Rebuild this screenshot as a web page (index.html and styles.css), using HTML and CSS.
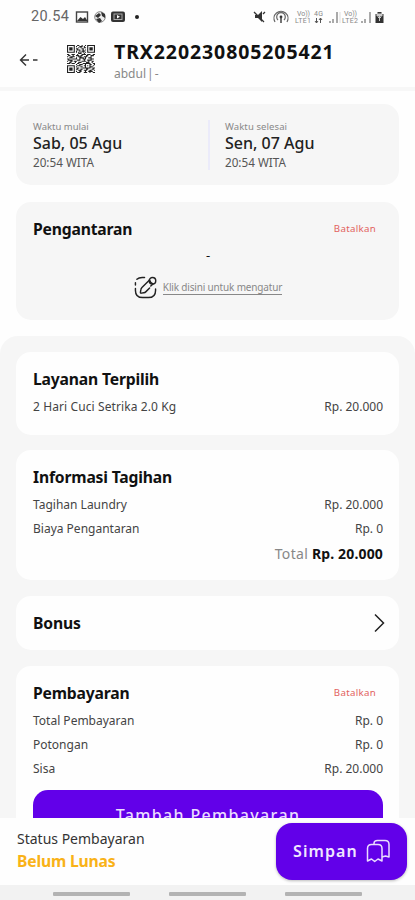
FILE: index.html
```html
<!DOCTYPE html>
<html lang="id">
<head>
<meta charset="utf-8">
<title>Detail Transaksi</title>
<link rel="stylesheet" href="styles.css">
</head>
<body>
<div class="phone">
  <div class="status">
    <span class="clock">20.54</span>
    <svg class="left-icons" viewBox="0 0 66 14">
      <rect x="1.5" y="2" width="11" height="10" fill="none" stroke="#444" stroke-width="1.4"/><path d="M2 11l3.500-4 2.500 2 2-2 2.500 4z" fill="#333"/>
      <circle cx="25" cy="7" r="5.300" fill="#eee" stroke="#888"/><path d="M20 6l4-3 2 2-3 3zM26 2l4 2v4l-3-2zM21 9l4-1 2 3-3 2z" fill="#333"/>
      <rect x="36" y="1.500" width="14" height="10.500" rx="2" fill="#333"/><rect x="39" y="4" width="8" height="5.500" fill="none" stroke="#aaa"/><path d="M42 5l3 1.800-3 1.800z" fill="#fff"/>
      <circle cx="62" cy="7" r="2" fill="#222"/>
    </svg>
    <svg class="right-icons" viewBox="0 0 134 16">
      <path d="M2 6h3l4-4v11l-4-4H2z" fill="#333"/><path d="M1 3l10 10M10 5l2-2" stroke="#333" stroke-width="1.300"/>
      <g fill="none" stroke="#666" stroke-width="1.200"><path d="M22 13a7 7 0 1 1 12 0M25 11a4.300 4.300 0 1 1 6 0"/></g><circle cx="28" cy="8" r="1.400" fill="#333"/><path d="M28 8v6" stroke="#444" stroke-width="1.500"/>
      <g class="tiny"><text x="44" y="7" textLength="13">Vo))</text><text x="42" y="14" textLength="16">LTE1</text><text x="61" y="7" textLength="9">4G</text><text x="91" y="7" textLength="13">Vo))</text><text x="89" y="14" textLength="16">LTE2</text></g>
      <path d="M63.500 9v5M67.500 9v5M62 12l1.500 2 1.500-2M66 11l1.500-2 1.500 2" stroke="#555" fill="none"/>
      <g stroke="#aaa" stroke-width="2"><path d="M77 14v-2M80 14v-4M84 14V3M109 14v-2M112 14v-4M117 14V3"/></g><path d="M87 14V3" stroke="#ddd"/>
      <path d="M122.500 5h2V3h4v2h2v9h-8z" fill="#333"/><path d="M124 5h5v2h-5zM126.500 7v5M125 9l1.500-1.500L128 9" fill="#ccc" stroke="#ccc"/>
    </svg>
  </div>

  <header class="header">
    <svg class="back" viewBox="0 0 20 14"><path d="M7 1.500L1.500 7 7 12.500M1.500 7H10M14 7h4.500" fill="none" stroke="#333" stroke-width="1.400"/></svg>
    <svg class="qr" viewBox="0 0 25 25">
      <path fill="none" stroke="#222" d="M.5.5h6v6h-6zM18.500.5h6v6h-6zM.5 18.500h6v6h-6z"/>
      <path fill="#222" d="M2 2h3v3H2zM20 2h3v3h-3zM2 20h3v3H2z"/>
      <path stroke="#222" d="M9 .5h2m2 0h1m2 0h1M8 1.500h1m2 0h3m1 0h1M10 2.500h1m1 0h1m2 0h2M8 3.500h2m3 0h2M9 4.500h3m2 0h1m1 0h1M8 5.500h1m2 0h1m1 0h3M8 6.500h1m1 0h1m1 0h1m1 0h1m1 0h1M10 7.500h3m2 0h1M0 8.500h2m2 0h3m2 0h1m3 0h4m1 0h3m2 0h2M1 9.500h2m2 0h1m2 0h3m1 0h2m3 0h2m2 0h3M0 10.500h1m2 0h4m3 0h3m2 0h3m3 0h1M2 11.500h3m3 0h1m2 0h4m1 0h1m2 0h3M0 12.500h2m3 0h4m2 0h1m2 0h3m4 0h3M1 13.500h4m4 0h3m3 0h1m2 0h4M0 14.500h1m2 0h2m1 0h3m4 0h4m2 0h1m2 0h2M2 15.500h2m3 0h1m2 0h3m4 0h3m2 0h1M0 16.500h3m1 0h3m2 0h2m3 0h7m2 0h2M8 17.500h1m2 0h3m2 0h1m3 0h2m2 0h1M9 18.500h3m3 0h2m1 0h1m1 0h1m2 0h1M8 19.500h1m3 0h2m2 0h1m3 0h3M9 20.500h2m3 0h7m2 0h2M8 21.500h2m2 0h2m3 0h2m3 0h2M10 22.500h3m2 0h3m2 0h2m2 0h1M8 23.500h1m2 0h2m3 0h1m2 0h4M9 24.500h3m3 0h3m2 0h1m2 0h2"/>
    </svg>
    <div>
      <div class="trx">TRX220230805205421</div>
      <div class="customer">abdul | -</div>
    </div>
  </header>

  <main class="content">
    <section class="card schedule">
      <div class="slot"><div class="slot-label">Waktu mulai</div><div class="date">Sab, 05 Agu</div><div class="time">20:54 WITA</div></div>
      <div class="slot end"><div class="slot-label">Waktu selesai</div><div class="date">Sen, 07 Agu</div><div class="time">20:54 WITA</div></div>
    </section>
    <section class="card delivery">
      <div class="title-row"><h2>Pengantaran</h2><span class="cancel">Batalkan</span></div>
      <div class="dash">-</div>
      <div class="arrange">
        <svg viewBox="0 0 24 24" fill="none" stroke="#222" stroke-width="1.500" stroke-linecap="round"><path d="M11 1.500H8.500Q5 1.500 3 3.500M1.500 7V9.500M1.500 13v2q0 7.500 7.500 7.500h6q7.500 0 7.500-7.500v-1.500"/><path d="M16.200 4.200L8.300 12q-1 1-1.200 2.500l-.4 2.500q-.1 1 .9.900l2.600-.4q1.300-.2 2.300-1.200l3.800-3.800"/><circle cx="19.300" cy="5" r="3.400"/><path d="M16.300 4.500q.8 2.800 3.500 3.800L17.500 10.500"/></svg>
        <span>Klik disini untuk mengatur</span>
      </div>
    </section>

    <div class="details">
      <section class="card service">
        <h2>Layanan Terpilih</h2>
        <div class="row"><span class="item">2 Hari Cuci Setrika 2.0 Kg</span><span>Rp. 20.000</span></div>
      </section>
      <section class="card bill">
        <h2>Informasi Tagihan</h2>
        <div class="row"><span>Tagihan Laundry</span><span>Rp. 20.000</span></div>
        <div class="row"><span>Biaya Pengantaran</span><span>Rp. 0</span></div>
        <div class="total"><span>Total</span> <b>Rp. 20.000</b></div>
      </section>
      <section class="card bonus">
        <h2>Bonus</h2>
        <svg viewBox="0 0 12 20"><path d="M2 1.500L10.500 10 2 18.500" fill="none" stroke="#222" stroke-width="1.500"/></svg>
      </section>
      <section class="card payment">
        <div class="title-row"><h2>Pembayaran</h2><span class="cancel">Batalkan</span></div>
        <div class="row"><span>Total Pembayaran</span><span>Rp. 0</span></div>
        <div class="row"><span>Potongan</span><span>Rp. 0</span></div>
        <div class="row"><span>Sisa</span><span>Rp. 20.000</span></div>
        <div class="add-payment">Tambah Pembayaran</div>
      </section>
    </div>
  </main>

  <footer class="footer">
    <div>
      <div class="pay-label">Status Pembayaran</div>
      <div class="pay-state">Belum Lunas</div>
    </div>
    <div class="save"><span>Simpan</span>
      <svg viewBox="0 0 24 24" fill="none" stroke="#eadcff" stroke-width="1.500" stroke-linejoin="round"><path d="M1.500 22V9.500q0-4 4-4h6.500q4 0 4 4V22l-4-2-3.300 2.500-3.200-2.500z"/><path d="M8 5V4.500q0-3 3.500-3H19q4 0 4 4V18l-3.500-1-3.500 1"/></svg>
    </div>
  </footer>
  <div class="navbar"><i></i><i></i><i></i></div>
</div>
</body>
</html>
```

FILE: styles.css
```css
* { box-sizing: border-box; }
body { margin: 0; background: #fefefe; font-family: "Noto Sans", "Open Sans", sans-serif; color: #151515; }
.phone { width: 415px; height: 900px; display: flex; flex-direction: column; overflow: hidden; background: #fefefe; }
svg { display: block; flex: none; }

.status { height: 32px; flex: none; display: flex; align-items: center; padding: 2px 28px 0 31px; }
.clock { font: 14.500px/20px Roboto, sans-serif; color: #666; width: 44px; letter-spacing: .35px; white-space: nowrap; }
.left-icons { width: 66px; height: 14px; }
.right-icons { width: 134px; height: 16px; margin-left: auto; }
.tiny { font: 7px Roboto, sans-serif; fill: #888; }

.header { height: 59px; flex: none; display: flex; border-bottom: 4px solid #f7f7f7; padding: 8px 0 0 19px; }
.back { width: 20px; height: 14px; margin-top: 13px; }
.qr { width: 28px; height: 28px; margin: 5px 19px 0 28px; }
.trx { font-size: 19.500px; line-height: 24px; font-weight: 700; letter-spacing: .9px; color: #111; white-space: nowrap; }
.customer { font-size: 12px; line-height: 19px; color: #888; word-spacing: -2px; }

.content { flex: 1; min-height: 0; overflow: hidden; padding-top: 13px; }
.card { margin: 0 16px; border-radius: 15px; padding: 0 16px 0 17px; }
h2 { margin: 0; font-size: 15.700px; line-height: 24px; font-weight: 700; letter-spacing: -.18px; color: #111; white-space: nowrap; }
.schedule { height: 81px; background: #f6f6f6; display: flex; align-items: center; }
.slot { width: 175px; height: 50px; }
.slot.end { border-left: 2px solid #ebebfa; padding-left: 15px; }
.slot-label { font-size: 9.500px; line-height: 12px; margin-top: 1px; color: #888; }
.slot.end .slot-label { letter-spacing: .1px; }
.date { font-size: 16px; line-height: 21px; font-weight: 500; color: #222; }
.time { font-size: 11.700px; line-height: 16px; color: #555; }

.delivery { height: 118px; margin-top: 17px; padding-top: 15px; background: #f6f6f6; }
.title-row { display: flex; justify-content: space-between; align-items: center; }
.cancel { font-size: 9.700px; line-height: 16px; letter-spacing: .3px; color: #e2625e; margin-right: 7px; }
.dash { font-size: 13px; line-height: 28px; text-align: center; }
.arrange { display: flex; align-items: center; justify-content: center; gap: 6px; margin-top: 7px; }
.arrange svg { width: 23px; height: 23px; }
.arrange span { font-size: 10px; line-height: 13px; letter-spacing: -.17px; color: #888; border-bottom: 1px solid #888; white-space: nowrap; }

.details { margin-top: 16px; padding-top: 16px; background: #f6f6f6; border-radius: 18px 18px 0 0; height: 600px; }
.details .card { background: #fefefe; }
.row { display: flex; justify-content: space-between; font-size: 12px; line-height: 24px; color: #444; white-space: nowrap; }
.item { letter-spacing: .1px; }
.details .service { height: 83px; padding-top: 15px; }
.service .row { margin-top: 4px; }
.details .bill { height: 130px; margin-top: 15px; padding-top: 15px; }
.bill .row:nth-of-type(1) { margin-top: 4px; }
.total { text-align: right; font-size: 14px; line-height: 26px; color: #888; }
.total span { letter-spacing: .35px; }
.total b { color: #111; letter-spacing: .15px; }
.details .bonus { height: 54px; margin-top: 16px; display: flex; justify-content: space-between; align-items: center; }
.bonus svg { width: 12px; height: 20px; margin-right: -2px; }
.details .payment { height: 220px; margin-top: 16px; padding-top: 15px; }
.payment .title-row { margin-bottom: 4px; }
.add-payment { margin-top: 9px; height: 56px; border-radius: 15px; background: #6200e9; color: #eadcff; text-align: center; font-size: 16px; font-weight: 500; letter-spacing: 1.350px; line-height: 51px; }

.footer { height: 67px; flex: none; display: flex; justify-content: space-between; padding: 5px 8px 0 17px; background: #fefefe; }
.pay-label { font-size: 14px; line-height: 20px; margin-top: 6px; color: #333; }
.pay-state { font-size: 15.700px; line-height: 24px; font-weight: 700; letter-spacing: -.18px; color: #f9b218; }
.save { width: 131px; height: 57px; border-radius: 16px; background: #6200e9; color: #f0e6ff; display: flex; align-items: center; gap: 8px; padding: 0 0 2px 17px; font-size: 16px; font-weight: 600; letter-spacing: 1.100px; box-shadow: 0 1px 3px #bbb; }
.save svg { width: 24px; height: 24px; }
.navbar { height: 15px; flex: none; background: #f2f2f2; display: flex; gap: 39px; padding: 7px 0 0 53px; }
.navbar i { width: 77px; height: 4px; border-radius: 1px; background: #b3b3b3; }
```
